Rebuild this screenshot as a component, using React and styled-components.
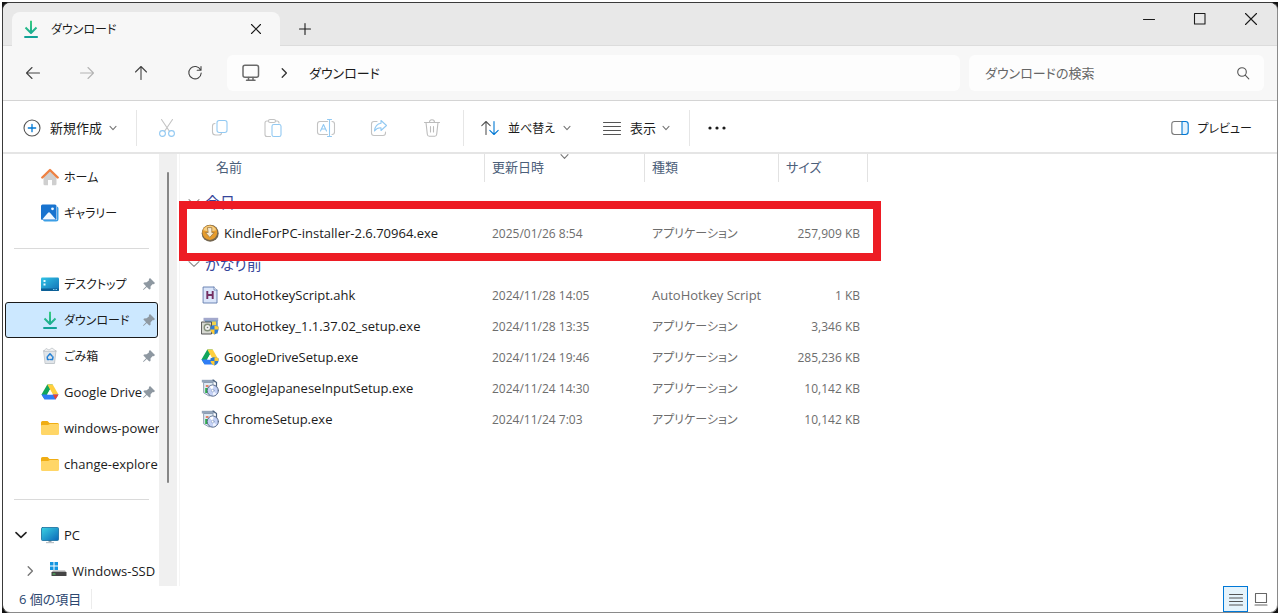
import React from "react"
import styled, { createGlobalStyle } from "styled-components"

const GlobalStyle = createGlobalStyle`
  * {
    box-sizing: border-box;
  }

  body {
    margin: 0;
    background: #ffffff;
    color: #1b1b1b;
    font-family: "Open Sans", "Noto Sans CJK JP", sans-serif;
    font-size: 13px;
    line-height: 20px;
    font-feature-settings: "palt";
  }

  button,
  input {
    font: inherit;
    font-feature-settings: inherit;
    color: inherit;
  }

  svg {
    display: block;
    flex: none;
  }
`

const Desktop = styled.div`
  height: 100vh;
  padding: 2px;
`

const Backdrop = styled.div`
  height: 100%;
  background: #111111;
`

const Window = styled.div`
  height: 100%;
  display: flex;
  flex-direction: column;
  overflow: hidden;
  border: 1px solid #3a3a3a;
  border-right-color: #8a8a8a;
  border-bottom-color: #8a8a8a;
  border-radius: 8px;
  background: #ffffff;
`

const PlainButton = styled.button`
  display: flex;
  align-items: center;
  justify-content: center;
  padding: 0;
  border: none;
  background: transparent;
  white-space: nowrap;
`

const Label = styled.span`
  display: inline-block;
  padding-top: ${props => (props.$small ? 2 : 0)}px;
  font-size: ${props => (props.$small ? 12 : 13)}px;
`

/* Tab strip */

const TabStrip = styled.header`
  flex: none;
  height: 43px;
  display: flex;
  align-items: flex-end;
  padding: 0 1px 0 9px;
  background: #e8e8e8;
  box-shadow: inset 0 -1px #dcdcdc;
`

const Tab = styled.div`
  width: 268px;
  height: 34px;
  display: flex;
  align-items: center;
  gap: 11px;
  padding: 0 17px 0 10px;
  border-radius: 8px 8px 0 0;
  background: #f7f7f7;
`

const TabTitle = styled(Label)`
  flex: 1;
`

const NewTab = styled(PlainButton)`
  width: 34px;
  height: 34px;
  margin-left: 8px;
`

const WindowControls = styled.div`
  display: flex;
  align-self: flex-start;
  margin-left: auto;
`

const ControlButton = styled(PlainButton)`
  width: 51px;
  height: 32px;
`

/* Navigation */

const NavBar = styled.nav`
  flex: none;
  height: 55px;
  display: flex;
  align-items: center;
  padding: 0 13px 0 11px;
  background: #f7f7f7;
  border-bottom: 1px solid #d4d4d4;
`

const NavButtons = styled.div`
  display: flex;
  gap: 16px;
  margin-right: 13px;
`

const NavButton = styled(PlainButton)`
  width: 38px;
  height: 36px;
  color: ${props => (props.disabled ? "#b4b4b4" : "#444444")};
`

const Address = styled.div`
  flex: 1;
  height: 36px;
  display: flex;
  align-items: center;
  padding-left: 15px;
  border-radius: 6px;
  background: #fdfdfd;
`

const Crumb = styled(PlainButton)`
  margin-left: ${props => props.$gap || 0}px;
`

const Search = styled.label`
  flex: none;
  width: 295px;
  height: 36px;
  display: flex;
  align-items: center;
  margin-left: 9px;
  padding: 0 14px 0 16px;
  border-radius: 6px;
  background: #fdfdfd;
`

const SearchInput = styled.input`
  flex: 1;
  min-width: 0;
  padding: 0;
  border: none;
  outline: none;
  background: transparent;

  &::placeholder {
    color: #666666;
    opacity: 1;
  }
`

/* Command bar */

const CommandBar = styled.div`
  flex: none;
  height: 53px;
  display: flex;
  align-items: center;
  padding: 2px 25px 0 20px;
  border-bottom: 2px solid #e5e5e5;
`

const Command = styled(PlainButton)`
  width: ${props => props.$width}px;
  height: 36px;
  margin-left: ${props => props.$gap || 0}px;
  justify-content: flex-start;

  span {
    margin: 0 auto 0 9px;
  }
`

const PreviewCommand = styled(PlainButton)`
  gap: 8px;
  height: 36px;
  margin-left: auto;
`

const IconCommands = styled.div`
  display: flex;
  gap: 15px;
  padding: 0 12px 0 11px;
`

const IconCommand = styled(PlainButton)`
  width: 38px;
  height: 36px;
`

const CommandDivider = styled.span`
  width: 1px;
  height: 36px;
  margin: 0 ${props => props.$right || 0}px 0 ${props => props.$left || 0}px;
  background: #e6e6e6;
`

/* Body */

const Body = styled.div`
  flex: 1;
  min-height: 0;
  display: flex;
`

const Sidebar = styled.aside`
  flex: none;
  width: 156px;
  padding-top: 5px;
  overflow: hidden;
`

const ScrollGutter = styled.div`
  flex: none;
  width: 18px;
  padding: 18px 0 0 8px;
  background: #f0f0f0;
`

const ScrollThumb = styled.div`
  width: 2px;
  height: 75%;
  border-radius: 1px;
  background: #868686;
`

const SideRow = styled.div`
  height: 36px;
  display: flex;
  align-items: center;
  margin: 0 1px 0 2px;
  padding-left: ${props => (props.$depth ? 18 : 9)}px;
  border: 1px solid ${props => (props.$selected ? "#1a1a1a" : "transparent")};
  border-radius: 3px;
  background: ${props => (props.$selected ? "#cce8ff" : "transparent")};
`

const Expander = styled.span`
  flex: none;
  width: ${props => (props.$depth ? 25 : 26)}px;
`

const SideLink = styled.a`
  flex: 1;
  min-width: 0;
  display: flex;
  align-items: center;
  gap: 5px;
  color: inherit;
  text-decoration: none;
`

const SideLabel = styled(Label)`
  flex: 1;
  min-width: 0;
  white-space: nowrap;
`

const PinSlot = styled.span`
  flex: none;
  margin: 0 1px 0 -6px;
`

const SideDivider = styled.hr`
  height: 1px;
  margin: 17px 10px 17px 11px;
  border: none;
  background: #dadada;
`

const Content = styled.main`
  flex: 1;
  min-width: 0;
  margin-left: 2px;
  border-left: 1px solid #f5f5f5;
`

const FileTable = styled.table`
  table-layout: fixed;
  width: 688px;
  border-collapse: separate;
  border-spacing: 0;
`

const HeadCell = styled.th`
  position: relative;
  width: ${props => props.$width}px;
  height: 28px;
  padding: 0 0 2px ${props => props.$indent || 7}px;
  border-right: 1px solid #e2e2e2;
  color: #4c607a;
  font-weight: normal;
  text-align: left;
`

const SortMark = styled.span`
  position: absolute;
  top: -2px;
  left: 50%;
  margin-left: -5px;
`

const GroupCell = styled.th`
  height: ${props => (props.$first ? 35 : 31)}px;
  padding: ${props => (props.$first ? 4 : 0)}px 0 0 8px;
  color: #36459a;
  font-weight: normal;
  font-size: 15px;
`

const GroupLabel = styled.span`
  display: flex;
  align-items: center;
  gap: 5px;
`

const FileRow = styled.tr`
  position: relative;
  height: 31px;
`

const Cell = styled.td`
  padding: 0 8px 0 7px;
  color: #6d6d6d;
  text-align: ${props => props.$align || "left"};
  white-space: nowrap;
`

const NameCell = styled(Cell)`
  padding-left: 21px;
  color: #1b1b1b;
`

const FileName = styled.span`
  display: flex;
  align-items: center;
  gap: 5px;
`

const Highlight = styled.span`
  position: absolute;
  top: -16px;
  right: -13px;
  bottom: -13px;
  left: -1px;
  border: 8px solid #ed1c24;
  pointer-events: none;
`

/* Status bar */

const StatusBar = styled.footer`
  flex: none;
  height: 26px;
  display: flex;
  align-items: center;
  padding: 0 4px 0 16px;
  color: #2c4770;
`

const StatusText = styled.span`
  padding-right: 10px;
  border-right: 1px solid #ececec;
`

const ViewButtons = styled.div`
  display: flex;
  margin-left: auto;
`

const ViewButton = styled(PlainButton)`
  width: 25px;
  height: 26px;
  border: 1px solid ${props => (props.$active ? "#0078d7" : "transparent")};
  background: ${props => (props.$active ? "#e5f3fb" : "transparent")};
`

/* Icons */

const Icon = ({ size = 18, stroke = "currentColor", width = 1.1, children }) => (
  <svg
    width={size}
    height={size}
    viewBox={`0 0 ${size} ${size}`}
    fill="none"
    stroke={stroke}
    strokeWidth={width}
    strokeLinecap="round"
    strokeLinejoin="round"
    aria-hidden="true"
  >
    {children}
  </svg>
)

const Chevron = ({ dir = "down", size = 8, stroke = "#777777", width = 1.1 }) => (
  <Icon size={size} stroke={stroke} width={width}>
    {dir === "down" ? (
      <path d={`M1 ${size * 0.3}L${size / 2} ${size * 0.7}L${size - 1} ${size * 0.3}`} />
    ) : (
      <path d={`M${size * 0.35} ${size * 0.15}L${size * 0.7} ${size / 2}L${size * 0.35} ${size * 0.85}`} />
    )}
  </Icon>
)

const DownloadIcon = () => (
  <Icon width={2}>
    <defs>
      <linearGradient id="download" x1="0" y1="0" x2="0" y2="18" gradientUnits="userSpaceOnUse">
        <stop offset="0" stopColor="#3bcf7f" />
        <stop offset="1" stopColor="#0f9f98" />
      </linearGradient>
    </defs>
    <path d="M9 0.8V12.8M3.5 7.5L9 13L14.5 7.5M2.3 17H15.8" stroke="url(#download)" strokeLinecap="butt" />
  </Icon>
)

const HomeIcon = () => (
  <Icon stroke="none">
    <path d="M2.5 8.5L9 2.5L15.5 8.5V16Q15.5 17.3 14.2 17.3H11V12H7V17.3H3.8Q2.5 17.3 2.5 16Z" fill="#cfcfcf" />
    <path d="M1.3 9.5L9 2L16.7 9.5" stroke="#ee8142" strokeWidth="2.4" />
  </Icon>
)

const GalleryIcon = () => (
  <Icon stroke="none">
    <path d="M16 2.5Q17.5 3 17.5 4.5V15Q17.5 17.5 15 17.5H4Q2.5 17.5 2 16H15Q16 16 16 15Z" fill="#3c9fe6" />
    <rect x="0" y="0.5" width="15.5" height="15.5" rx="1.5" fill="#1873cf" />
    <path d="M1.2 15.5L7 8.8Q8 7.8 9 8.8L14.8 15.5Z" fill="#f2f9ff" />
    <circle cx="11.5" cy="4.8" r="1.4" fill="#f2f9ff" />
  </Icon>
)

const DesktopIcon = () => (
  <Icon stroke="none">
    <defs>
      <linearGradient id="desk" x1="0" y1="0" x2="1" y2="1">
        <stop offset="0" stopColor="#31c4e6" />
        <stop offset="1" stopColor="#116fb5" />
      </linearGradient>
    </defs>
    <rect x="0" y="2.5" width="18" height="13.5" rx="1.2" fill="url(#desk)" />
    <path d="M0 13.5H18V15Q18 16 17 16H1Q0 16 0 15Z" fill="#0c5f96" />
    <path d="M2.5 5H4.5V7H2.5ZM2.5 8.5H4.5V10.5H2.5Z" fill="#e8fbff" />
    <path d="M12 14H13.5V15H12ZM14.5 14H16V15H14.5Z" fill="#7cd0f4" />
  </Icon>
)

const TrashCanIcon = () => (
  <Icon stroke="none">
    <path d="M3 3.5L15 3.5L13.5 16.5H4.5Z" fill="#e1e5e9" stroke="#b6bcc2" strokeWidth="0.8" />
    <path d="M3 4L5 1.5L8 3L11 1L15 4Z" fill="#f5f5f5" stroke="#b6bcc2" strokeWidth="0.7" />
    <path d="M7 9L9 6.8L11 9M12 10L11.5 12.5H9.5M8 12.5H6.5L6.2 10" fill="none" stroke="#2581d4" strokeWidth="1.5" />
  </Icon>
)

const DriveIcon = ({ shield }) => (
  <Icon stroke="none">
    <path d="M6.3 1.5H11.7L9 6.4L3.5 16.3L0.5 11.5Z" fill="#11a55b" />
    <path d="M6.3 1.5H11.7L17.5 11.5H11.8Z" fill="#ffcf3f" />
    <path d="M0.5 11.5H17.5L14.5 16.5H3.5Z" fill="#2f7df6" />
    <path d="M11.8 11.5H17.5L14.5 16.5Z" fill="#ea4335" />
    <path d="M9 6.4L11.8 11.5H6.2Z" fill="#ffffff" />
    {shield && (
      <g>
        <path d="M13.5 9L17.5 10.2V13Q17 16 13.5 17.5Q10 16 9.5 13V10.2Z" fill="#2e7bd5" />
        <path d="M13.5 9V13H17.5V10.2ZM9.5 13H13.5V17.5Q10 16 9.5 13Z" fill="#ffcc33" />
      </g>
    )}
  </Icon>
)

const FolderIcon = () => (
  <Icon stroke="none">
    <path d="M0 3.5Q0 2 1.5 2H6.5L8.5 4H16.5Q18 4 18 5.5V8H0Z" fill="#f0ad13" />
    <path d="M0 7Q0 6 1 6H7L9 5H17Q18 5 18 6V14.5Q18 16 16.5 16H1.5Q0 16 0 14.5Z" fill="#ffd667" />
  </Icon>
)

const PcIcon = () => (
  <Icon stroke="none">
    <defs>
      <linearGradient id="pc" x1="0" y1="0" x2="1" y2="1">
        <stop offset="0" stopColor="#3bd2e3" />
        <stop offset="1" stopColor="#0b67b8" />
      </linearGradient>
    </defs>
    <path d="M7.5 14H10.5V16.5H7.5Z" fill="#9ba5ad" />
    <path d="M5 16H13V17.2H5Z" fill="#b9c1c7" />
    <rect x="0.5" y="1.5" width="17" height="13" rx="1" fill="url(#pc)" stroke="#176c9c" strokeWidth="0.8" />
  </Icon>
)

const DiskIcon = () => (
  <Icon stroke="none">
    <path d="M1 0H4.5V3.5H1ZM5.5 0H9V3.5H5.5ZM1 4.5H4.5V8H1ZM5.5 4.5H9V8H5.5Z" fill="#1495e0" />
    <path d="M4 8.5H16L17.5 10.5H2.5Z" fill="#a9a9a9" />
    <rect x="2.5" y="10" width="15" height="4" rx="0.5" fill="#454545" />
    <path d="M4 12H6" stroke="#59d66a" strokeWidth="1.2" />
  </Icon>
)

const PinIcon = () => (
  <Icon size={14} stroke="none">
    <path d="M8 1L13 6L11.8 7.2L10.8 6.9L8.6 9.3L8.5 12L7.3 12.5L4.8 9.9L1.5 13L1 12.5L4.1 9.2L1.4 6.5L2 5.4L4.7 5.2L7.1 3.2L6.8 2.2Z" fill="#8e98a1" />
  </Icon>
)

const KindleIcon = () => (
  <Icon stroke="none">
    <circle cx="9.2" cy="9.3" r="8.5" fill="#74664f" />
    <circle cx="8.8" cy="8.6" r="7.4" fill="#e59b2c" />
    <path d="M2.4 6.2A6.8 6.8 0 0 1 15.2 6.2Q9 8.5 2.4 6.2Z" fill="#f7cf83" />
    <path d="M6.8 3.6H10.8V8.5H13.2L8.8 13.4L4.4 8.5H6.8Z" fill="#f5ead2" stroke="#9d7740" strokeWidth="0.8" />
  </Icon>
)

const ScriptIcon = () => (
  <Icon stroke="none">
    <path d="M2.5 1H13L16 4V17H2.5Z" fill="#dbe6fa" stroke="#5d78ab" strokeWidth="0.9" />
    <path d="M13 1V4H16" fill="#ffffff" stroke="#5d78ab" strokeWidth="0.8" />
    <path d="M6.3 5V13M11.7 5V13M6.3 9H11.7" stroke="#743062" strokeWidth="1.9" strokeLinecap="butt" />
  </Icon>
)

const InstallerIcon = () => (
  <Icon stroke="none">
    <path d="M2.5 0.8H17.2V4H2.5Z" fill="#a3a8cc" />
    <path d="M4 3.5H16.8V16.5H4Z" fill="#6f9cc4" />
    <path d="M11 4.5H15V8H11Z" fill="#f0d34b" />
    <path d="M0.8 5H10.5V17H0.8Z" fill="#d6d8d1" stroke="#555555" strokeWidth="1" />
    <circle cx="6.5" cy="10.5" r="3.2" fill="#f2f2f2" stroke="#84907a" strokeWidth="1.4" />
    <circle cx="6.5" cy="10.5" r="0.8" fill="#777777" />
    <path d="M13.5 8.5L17.5 9.8V12.5Q17 16 13.5 17.5Q10 16 9.5 12.5V9.8Z" fill="#2e7bd5" />
    <path d="M13.5 8.5V12.5H17.5V9.8ZM9.5 12.5H13.5V17.5Q10 16 9.5 12.5Z" fill="#ffcc33" />
  </Icon>
)

const SetupIcon = () => (
  <Icon stroke="none">
    <path d="M0.8 0.8H13.5V3.5H0.8Z" fill="#93a5ba" />
    <path d="M3 3.5H12V15L8 17L3 14Z" fill="#dfeaf4" stroke="#8495ad" strokeWidth="0.9" />
    <path d="M12 1L15.5 3.5V8" fill="none" stroke="#4f6480" strokeWidth="1.2" />
    <path d="M4.2 9H7V14H4.2Z" fill="#2cae48" />
    <path d="M4.8 6H7.5V8H4.8Z" fill="#e08367" />
    <circle cx="11.8" cy="11.6" r="5.6" fill="#c3d0f5" stroke="#596a88" strokeWidth="1" />
    <path d="M11.8 11.6L8.6 7.8A5 5 0 0 1 12.5 6.6Z" fill="#ffffff" />
    <path d="M11.8 11.6L15.5 14.8A5 5 0 0 1 12 16.6Z" fill="#eef3ff" />
    <circle cx="11.8" cy="11.6" r="1.4" fill="#ffffff" stroke="#8da0c4" strokeWidth="0.7" />
  </Icon>
)

const CutIcon = () => (
  <Icon size={20} stroke="#c3c3c3">
    <path d="M4.5 1.5L12.6 13.5M15.5 1.5L7.4 13.5" />
    <circle cx="5.5" cy="15.5" r="2.9" stroke="#92c9f2" />
    <circle cx="14.5" cy="15.5" r="2.9" stroke="#92c9f2" />
  </Icon>
)

const CopyIcon = () => (
  <Icon size={20} stroke="#c3c3c3">
    <path d="M5 5.5Q2.5 5.5 2.5 8V14Q2.5 17 5.5 17H9Q11.5 17 11.5 15" />
    <rect x="7" y="2.5" width="10" height="12" rx="2.2" stroke="#92c9f2" />
  </Icon>
)

const PasteIcon = () => (
  <Icon size={20} stroke="#c3c3c3">
    <path d="M5.5 3H4Q2 3 2 5V16.5Q2 18.5 4 18.5H7.5M12.5 3H14Q16 3 16 5" />
    <rect x="5.5" y="1.5" width="7" height="3" rx="1.5" />
    <rect x="9" y="6.5" width="9" height="12" rx="1.8" stroke="#92c9f2" />
  </Icon>
)

const RenameIcon = () => (
  <Icon size={20} stroke="#c3c3c3">
    <path d="M11.5 3.5H4Q1.5 3.5 1.5 6V14Q1.5 16.5 4 16.5H11.5M16 3.5Q18.5 3.5 18.5 6V14Q18.5 16.5 16 16.5" />
    <path d="M13.5 1.5V18.5M11.5 1.5H15.5M11.5 18.5H15.5M4.5 13L7.5 6.5L10.5 13M5.5 11H9.5" stroke="#92c9f2" />
  </Icon>
)

const ShareIcon = () => (
  <Icon size={20} stroke="#c3c3c3">
    <path d="M8 3.5H5Q2.5 3.5 2.5 6V15Q2.5 17.5 5 17.5H14Q16.5 17.5 16.5 15V14" />
    <path d="M12 2.5L17.5 7.5L12 12.5V9.8Q8 9.6 5.5 13Q6.2 6 12 5.3Z" stroke="#92c9f2" />
  </Icon>
)

const DeleteIcon = () => (
  <Icon size={20} stroke="#bcbcbc">
    <path d="M2.5 4.5H17.5M7.5 4.5Q7.5 1.8 10 1.8Q12.5 1.8 12.5 4.5M4 4.5L5.3 16.3Q5.5 18.3 7.3 18.3H12.7Q14.5 18.3 14.7 16.3L16 4.5M8.5 8.5V14M11.5 8.5V14" />
  </Icon>
)

const files = {
  today: [
    { name: "KindleForPC-installer-2.6.70964.exe", date: "2025/01/26 8:54", type: "アプリケーション", size: "257,909 KB", icon: <KindleIcon />, marked: true },
  ],
  older: [
    { name: "AutoHotkeyScript.ahk", date: "2024/11/28 14:05", type: "AutoHotkey Script", size: "1 KB", icon: <ScriptIcon />, latin: true },
    { name: "AutoHotkey_1.1.37.02_setup.exe", date: "2024/11/28 13:35", type: "アプリケーション", size: "3,346 KB", icon: <InstallerIcon /> },
    { name: "GoogleDriveSetup.exe", date: "2024/11/24 19:46", type: "アプリケーション", size: "285,236 KB", icon: <DriveIcon shield /> },
    { name: "GoogleJapaneseInputSetup.exe", date: "2024/11/24 14:30", type: "アプリケーション", size: "10,142 KB", icon: <SetupIcon /> },
    { name: "ChromeSetup.exe", date: "2024/11/24 7:03", type: "アプリケーション", size: "10,142 KB", icon: <SetupIcon /> },
  ],
}

const quickAccess = [
  { label: "デスクトップ", icon: <DesktopIcon />, pinned: true, small: true },
  { label: "ダウンロード", icon: <DownloadIcon />, pinned: true, small: true, selected: true },
  { label: "ごみ箱", icon: <TrashCanIcon />, pinned: true, small: true },
  { label: "Google Drive", icon: <DriveIcon />, pinned: true },
  { label: "windows-power", icon: <FolderIcon /> },
  { label: "change-explore", icon: <FolderIcon /> },
]

const SideItem = ({ label, icon, pinned, small, selected, depth, expander }) => (
  <SideRow $selected={selected} $depth={depth}>
    <Expander $depth={depth}>{expander}</Expander>
    <SideLink href="#">
      {icon}
      <SideLabel $small={small}>{label}</SideLabel>
      {pinned && (
        <PinSlot>
          <PinIcon />
        </PinSlot>
      )}
    </SideLink>
  </SideRow>
)

const Group = ({ label, rows, first }) => (
  <tbody>
    <tr>
      <GroupCell colSpan={4} scope="rowgroup" $first={first}>
        <GroupLabel>
          <Chevron size={12} stroke="#8a8a8a" />
          {label}
        </GroupLabel>
      </GroupCell>
    </tr>
    {rows.map(file => (
      <FileRow key={file.name}>
        <NameCell>
          <FileName>
            {file.icon}
            {file.name}
          </FileName>
          {file.marked && <Highlight />}
        </NameCell>
        <Cell>
          <Label $small>{file.date}</Label>
        </Cell>
        <Cell>
          <Label $small={!file.latin}>{file.type}</Label>
        </Cell>
        <Cell $align="right">
          <Label $small>{file.size}</Label>
        </Cell>
      </FileRow>
    ))}
  </tbody>
)

const App = () => (
  <Desktop>
    <GlobalStyle />
    <Backdrop>
      <Window>
        <TabStrip>
          <Tab>
            <DownloadIcon />
            <TabTitle $small>ダウンロード</TabTitle>
            <PlainButton aria-label="タブを閉じる">
              <Icon size={14}>
                <path d="M2.5 2.5L11.5 11.5M11.5 2.5L2.5 11.5" />
              </Icon>
            </PlainButton>
          </Tab>
          <NewTab aria-label="新しいタブ">
            <Icon size={14}>
              <path d="M7 1.5V12.5M1.5 7H12.5" />
            </Icon>
          </NewTab>
          <WindowControls>
            <ControlButton aria-label="最小化">
              <Icon size={14}>
                <path d="M1.5 7.5H12.5" />
              </Icon>
            </ControlButton>
            <ControlButton aria-label="最大化">
              <Icon size={14}>
                <rect x="1.5" y="1.5" width="10.5" height="10.5" />
              </Icon>
            </ControlButton>
            <ControlButton aria-label="閉じる">
              <Icon size={14}>
                <path d="M1.5 1.5L12.5 12.5M12.5 1.5L1.5 12.5" />
              </Icon>
            </ControlButton>
          </WindowControls>
        </TabStrip>

        <NavBar>
          <NavButtons>
            <NavButton aria-label="戻る">
              <Icon>
                <path d="M15.5 9H2.5M8 3.5L2.5 9L8 14.5" />
              </Icon>
            </NavButton>
            <NavButton aria-label="進む" disabled>
              <Icon>
                <path d="M2.5 9H15.5M10 3.5L15.5 9L10 14.5" />
              </Icon>
            </NavButton>
            <NavButton aria-label="上へ">
              <Icon>
                <path d="M9 15.5V2.5M3.5 8L9 2.5L14.5 8" />
              </Icon>
            </NavButton>
            <NavButton aria-label="更新">
              <Icon>
                <path d="M14.6 6A6.2 6.2 0 1 0 15.2 9M15 2.5V6.3H11.2" />
              </Icon>
            </NavButton>
          </NavButtons>
          <Address>
            <Crumb aria-label="PC">
              <Icon stroke="#6a6a6a" width={1.5}>
                <rect x="1" y="1.2" width="15.5" height="12" rx="2" />
                <path d="M6.5 13.5V16M11 13.5V16M4.5 16.3H13" />
              </Icon>
            </Crumb>
            <Crumb aria-label="展開" $gap={18}>
              <Chevron dir="right" size={12} stroke="#333333" width={1.3} />
            </Crumb>
            <Crumb $gap={19}>ダウンロード</Crumb>
          </Address>
          <Search>
            <SearchInput type="search" aria-label="ダウンロードの検索" placeholder="ダウンロードの検索" />
            <Icon size={14} stroke="#555555">
              <circle cx="6" cy="6" r="4.3" />
              <path d="M9.2 9.2L12.8 12.8" />
            </Icon>
          </Search>
        </NavBar>

        <CommandBar>
          <Command $width={94}>
            <Icon>
              <circle cx="9" cy="9" r="8" stroke="#555555" />
              <path d="M9 5.3V12.7M5.3 9H12.7" stroke="#0078d4" strokeWidth="1.3" />
            </Icon>
            <Label>新規作成</Label>
            <Chevron />
          </Command>
          <CommandDivider $left={19} />
          <IconCommands>
            <IconCommand aria-label="切り取り" disabled><CutIcon /></IconCommand>
            <IconCommand aria-label="コピー" disabled><CopyIcon /></IconCommand>
            <IconCommand aria-label="貼り付け" disabled><PasteIcon /></IconCommand>
            <IconCommand aria-label="名前の変更" disabled><RenameIcon /></IconCommand>
            <IconCommand aria-label="共有" disabled><ShareIcon /></IconCommand>
            <IconCommand aria-label="削除" disabled><DeleteIcon /></IconCommand>
          </IconCommands>
          <CommandDivider $right={17} />
          <Command $width={90}>
            <Icon>
              <path d="M5 15.5V2.5M0.8 6.7L5 2.5L9.2 6.7" stroke="#555555" />
              <path d="M13 2.5V15.5M8.8 11.3L13 15.5L17.2 11.3" stroke="#0078d4" />
            </Icon>
            <Label $small>並べ替え</Label>
            <Chevron />
          </Command>
          <Command $width={67} $gap={32}>
            <Icon stroke="#555555">
              <path d="M0.5 3.5H17.5M0.5 7.5H17.5M0.5 11.5H17.5M0.5 15.5H17.5" />
            </Icon>
            <Label>表示</Label>
            <Chevron />
          </Command>
          <CommandDivider $left={19} $right={17} />
          <PlainButton aria-label="もっと見る">
            <Icon size={20} stroke="none">
              <g fill="#1b1b1b">
                <circle cx="3" cy="10" r="1.6" />
                <circle cx="10" cy="10" r="1.6" />
                <circle cx="17" cy="10" r="1.6" />
              </g>
            </Icon>
          </PlainButton>
          <PreviewCommand>
            <Icon>
              <path d="M11 2.5H3.5Q0.8 2.5 0.8 5.2V12.8Q0.8 15.5 3.5 15.5H11" stroke="#777777" />
              <path d="M11 2.5H14.5Q17.2 2.5 17.2 5.2V12.8Q17.2 15.5 14.5 15.5H11Z" stroke="#0078d4" fill="#e5f3fd" />
            </Icon>
            <Label $small>プレビュー</Label>
          </PreviewCommand>
        </CommandBar>

        <Body>
          <Sidebar>
            <SideItem label="ホーム" icon={<HomeIcon />} small />
            <SideItem label="ギャラリー" icon={<GalleryIcon />} small />
            <SideDivider />
            {quickAccess.map(item => (
              <SideItem key={item.label} {...item} />
            ))}
            <SideDivider />
            <SideItem label="PC" icon={<PcIcon />} expander={<Chevron size={12} stroke="#222222" width={1.6} />} />
            <SideItem
              label="Windows-SSD"
              icon={<DiskIcon />}
              depth={1}
              expander={<Chevron dir="right" size={12} stroke="#777777" width={1.4} />}
            />
          </Sidebar>
          <ScrollGutter>
            <ScrollThumb />
          </ScrollGutter>
          <Content>
            <FileTable>
              <thead>
                <tr>
                  <HeadCell $width={305} $indent={36}>名前</HeadCell>
                  <HeadCell $width={160}>
                    更新日時
                    <SortMark>
                      <Chevron size={9} />
                    </SortMark>
                  </HeadCell>
                  <HeadCell $width={134}>種類</HeadCell>
                  <HeadCell $width={89}>サイズ</HeadCell>
                </tr>
              </thead>
              <Group label="今日" rows={files.today} first />
              <Group label="かなり前" rows={files.older} />
            </FileTable>
          </Content>
        </Body>

        <StatusBar>
          <StatusText>6 個の項目</StatusText>
          <ViewButtons>
            <ViewButton aria-label="詳細" $active>
              <Icon size={16} stroke="#555555">
                <path d="M1.5 3.5H14.5M1.5 7H14.5M1.5 10.5H14.5M1.5 14H14.5" />
              </Icon>
            </ViewButton>
            <ViewButton aria-label="大アイコン">
              <Icon size={14} stroke="#666666">
                <path d="M1.5 1.5H12.5V10.5H1.5ZM1 13H13" />
              </Icon>
            </ViewButton>
          </ViewButtons>
        </StatusBar>
      </Window>
    </Backdrop>
  </Desktop>
)

export default App
